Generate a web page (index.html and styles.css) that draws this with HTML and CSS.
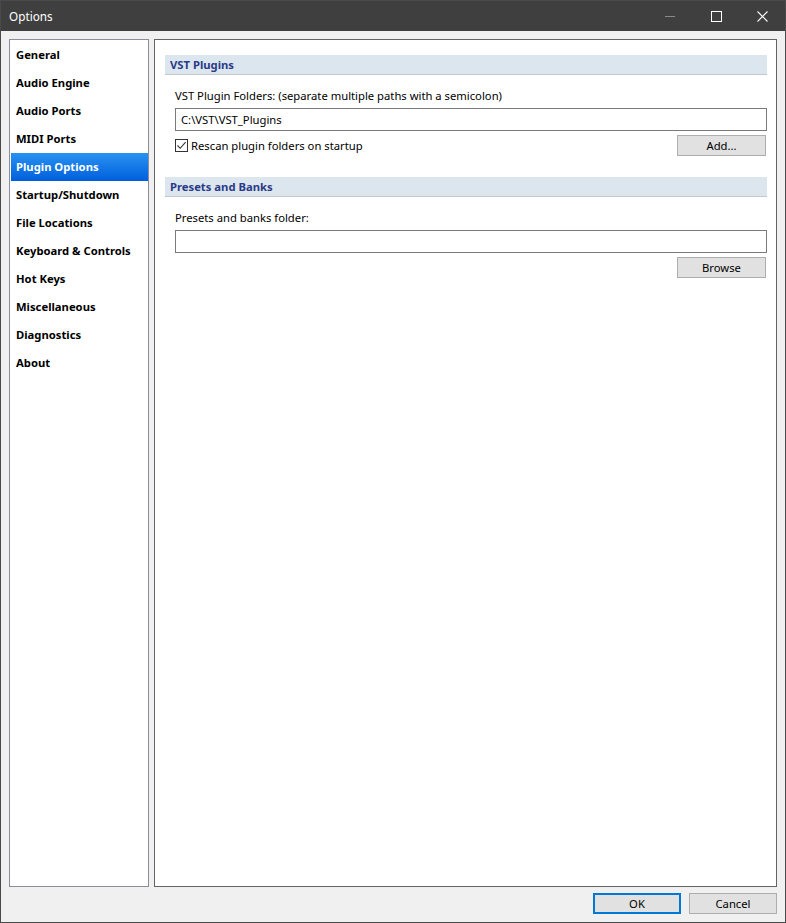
FILE: index.html
```html
<!DOCTYPE html>
<html lang="en">
<head>
    <meta charset="UTF-8">
    <title>Options</title>
    <link rel="stylesheet" href="styles.css">
</head>
<body>
    <div class="window">
        <!-- Title bar -->
        <div class="titlebar">
            <span class="title">Options</span>
            <div class="caption-buttons">
                <span class="cap-btn">
                    <svg width="10" height="10" viewBox="0 0 10 10"><line x1="0" y1="5.5" x2="10" y2="5.5" stroke="#8a8a8a" stroke-width="1"/></svg>
                </span>
                <span class="cap-btn">
                    <svg width="11" height="11" viewBox="0 0 11 11"><rect x="0.5" y="0.5" width="10" height="10" fill="none" stroke="#fff" stroke-width="1"/></svg>
                </span>
                <span class="cap-btn">
                    <svg width="11" height="11" viewBox="0 0 11 11"><path d="M0.5 0.5 L10.5 10.5 M10.5 0.5 L0.5 10.5" stroke="#fff" stroke-width="1.1"/></svg>
                </span>
            </div>
        </div>

        <div class="content">
            <!-- Page list -->
            <ul class="page-list">
                <li>General</li>
                <li>Audio Engine</li>
                <li>Audio Ports</li>
                <li>MIDI Ports</li>
                <li class="selected">Plugin Options</li>
                <li>Startup/Shutdown</li>
                <li>File Locations</li>
                <li>Keyboard &amp; Controls</li>
                <li>Hot Keys</li>
                <li>Miscellaneous</li>
                <li>Diagnostics</li>
                <li>About</li>
            </ul>

            <!-- Page body -->
            <div class="page">
                <div class="section">
                    <div class="section-header">VST Plugins</div>
                    <div class="section-body">
                        <div class="field-label">VST Plugin Folders: (separate multiple paths with a semicolon)</div>
                        <div class="textbox">C:\VST\VST_Plugins</div>
                        <div class="row">
                            <label class="checkbox">
                                <span class="box">
                                    <svg width="11" height="11" viewBox="0 0 11 11"><path d="M1.5 5.5 L4.2 8.3 L9.6 2.2" fill="none" stroke="#333" stroke-width="1.1"/></svg>
                                </span>
                                Rescan plugin folders on startup
                            </label>
                            <button class="btn">Add...</button>
                        </div>
                    </div>
                </div>

                <div class="section">
                    <div class="section-header">Presets and Banks</div>
                    <div class="section-body">
                        <div class="field-label">Presets and banks folder:</div>
                        <div class="textbox"></div>
                        <div class="row end">
                            <button class="btn">Browse</button>
                        </div>
                    </div>
                </div>
            </div>
        </div>

        <!-- Dialog buttons -->
        <div class="footer">
            <button class="btn dialog-btn default">OK</button>
            <button class="btn dialog-btn">Cancel</button>
        </div>
    </div>
</body>
</html>
```

FILE: styles.css
```css
* {
    box-sizing: border-box;
}
body {
    margin: 0;
    font-family: "Segoe UI", "Noto Sans", sans-serif;
    font-size: 11.25px;
    color: #000;
    background: #f0f0f0;
}
.window {
    width: 786px;
    height: 923px;
    border: 1px solid #4a4a4a;
    background-color: #f0f0f0;
    display: flex;
    flex-direction: column;
}
.titlebar {
    height: 30px;
    background-color: #3f3f3f;
    color: #ffffff;
    display: flex;
    align-items: center;
    padding-left: 8px;
}
.title {
    flex: 1;
    font-size: 11.75px;
}
.caption-buttons {
    display: flex;
    height: 100%;
}
.cap-btn {
    width: 46px;
    height: 100%;
    display: flex;
    align-items: center;
    justify-content: center;
}
.content {
    flex: 1;
    display: flex;
    gap: 5px;
    padding: 8px 8px 0 8px;
    min-height: 0;
}
.page-list {
    list-style: none;
    margin: 0;
    padding: 1px 0 1px 1px;
    width: 140px;
    border: 1px solid #8c8c9c;
    background-color: #ffffff;
}
.page-list li {
    height: 28px;
    line-height: 28px;
    padding-left: 5px;
    font-weight: bold;
    white-space: nowrap;
}
.page-list li.selected {
    background: linear-gradient(to bottom, #2892f2, #005fdc);
    color: #ffffff;
}
.page {
    flex: 1;
    border: 1px solid #646464;
    background-color: #ffffff;
    padding: 15px 9px 0 10px;
}
.section {
    margin-bottom: 21px;
}
.section-header {
    height: 20px;
    line-height: 19px;
    background-color: #dce6ee;
    border-bottom: 1px solid #c3c8cc;
    color: #2b3a88;
    font-weight: bold;
    padding-left: 5px;
}
.section-body {
    padding-left: 10px;
}
.field-label {
    margin-top: 13px;
    line-height: 16px;
    height: 16px;
}
.textbox {
    margin-top: 4px;
    height: 23px;
    line-height: 21px;
    border: 1px solid #7a7a7a;
    padding-left: 5px;
    background-color: #ffffff;
}
.row {
    margin-top: 4px;
    margin-right: 1px;
    display: flex;
    align-items: center;
    justify-content: space-between;
}
.row.end {
    justify-content: flex-end;
}
.checkbox {
    display: flex;
    align-items: center;
    gap: 3px;
}
.box {
    width: 13px;
    height: 13px;
    border: 1px solid #333333;
    display: flex;
    align-items: center;
    justify-content: center;
    background-color: #ffffff;
}
.btn {
    width: 89px;
    height: 21px;
    padding: 0;
    font-family: inherit;
    font-size: 11.25px;
    color: #000;
    background-color: #e1e1e1;
    border: 1px solid #adadad;
}
.footer {
    display: flex;
    justify-content: flex-end;
    gap: 8px;
    padding: 6px 8px 8px 0;
}
.dialog-btn {
    width: 88px;
}
.dialog-btn.default {
    border: 2px solid #0078d7;
}
```
